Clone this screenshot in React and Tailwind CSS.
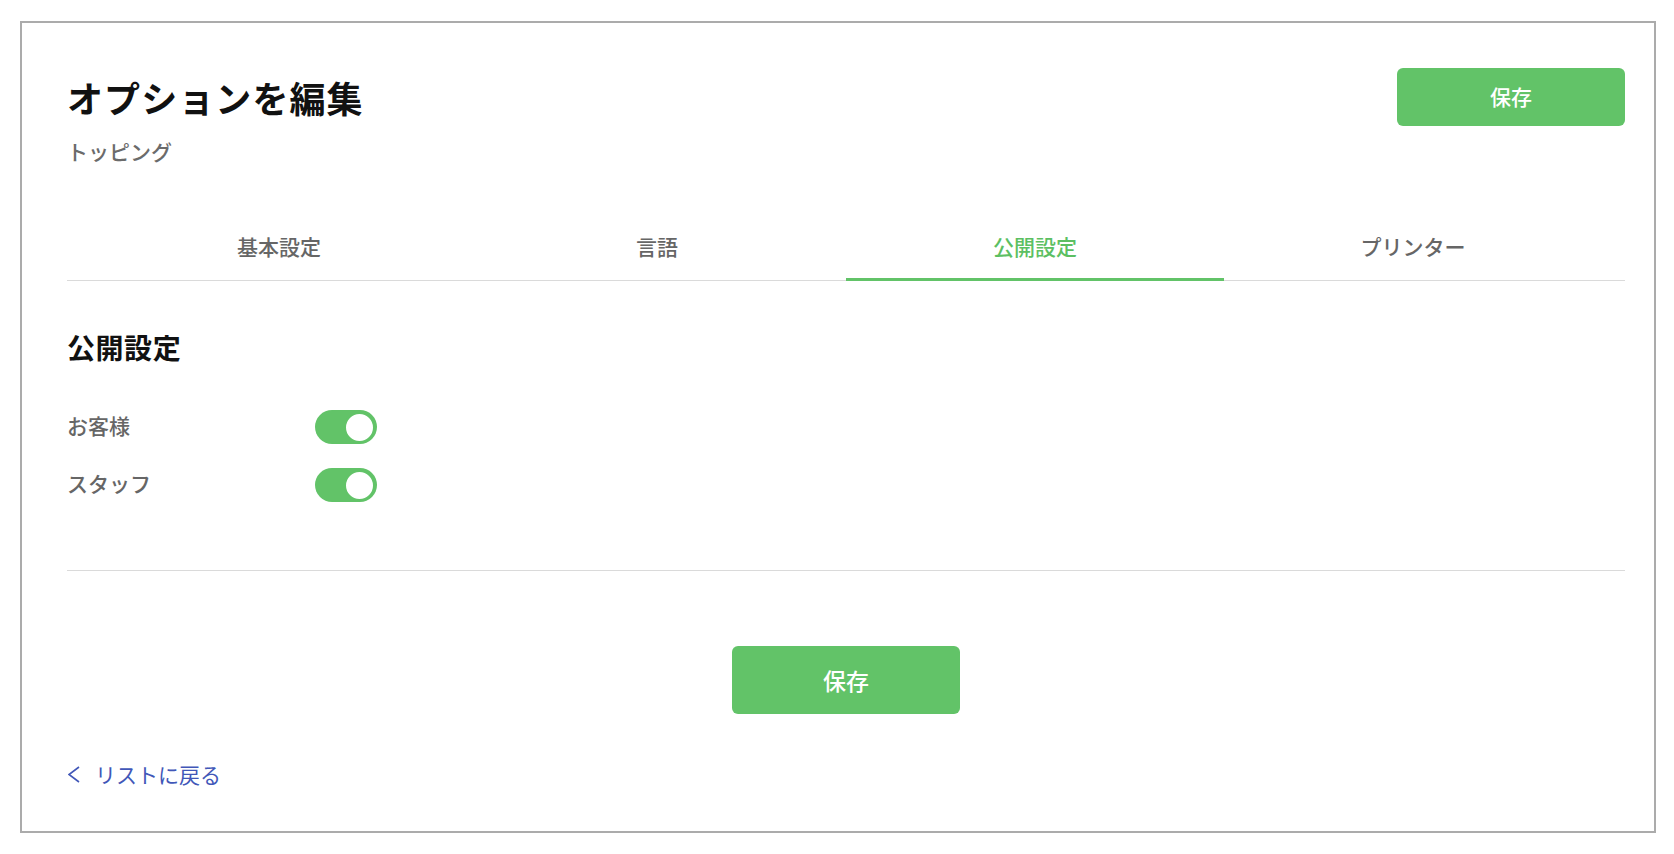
import React, { useState } from "react";

const FONT = { fontFamily: '"Noto Sans CJK JP", "Noto Sans", sans-serif' };

function Toggle({ on, onChange }) {
  return (
    <button
      type="button"
      onClick={onChange}
      className={`w-[62px] h-[34px] rounded-full flex items-center px-[2px] ${on ? "bg-[#62c368] justify-end" : "bg-[#d5d5d5] justify-start"}`}
    >
      <span className={`block w-[31px] h-[31px] rounded-full bg-white border-2 ${on ? "border-[#62c368]" : "border-[#d5d5d5]"}`} />
    </button>
  );
}

export default function App() {
  const [tab, setTab] = useState(2);
  const [customer, setCustomer] = useState(true);
  const [staff, setStaff] = useState(true);
  const tabs = ["基本設定", "言語", "公開設定", "プリンター"];

  return (
    <div className="w-[1674px] h-[854px] bg-white pt-[21px] pl-[20px]" style={FONT}>
      <div className="w-[1636px] h-[812px] border-2 border-[#ababab] pl-[45px] pr-[29px] pt-[45px] flex flex-col">
        <div className="flex justify-between items-start">
          <div className="flex flex-col">
            <h1 className="text-[36px] leading-[58px] pb-[6px] font-bold text-[#111] tracking-[0.03em]">オプションを編集</h1>
            <div className="mt-[5px] text-[21px] leading-[28px] text-[#6b6b6b] font-medium">トッピング</div>
          </div>
          <button className="w-[228px] h-[58px] rounded-[6px] bg-[#62c368] text-white text-[21px] font-medium">保存</button>
        </div>

        <div className="mt-[49px] border-b border-[#dadada]">
          <div className="flex px-[23px] -mb-px">
            {tabs.map((t, i) => (
              <button
                key={t}
                type="button"
                onClick={() => setTab(i)}
                className={`flex-1 h-[67px] pt-0 flex items-center justify-center border-b-[3px] text-[21px] leading-[28px] font-medium ${i === tab ? "border-[#62c368] text-[#5cbf62]" : "border-transparent text-[#666]"}`}
              >
                {t}
              </button>
            ))}
          </div>
        </div>

        <h2 className="mt-[48px] text-[28px] leading-[36px] font-bold text-[#111] tracking-[0.02em]">公開設定</h2>

        <div className="mt-[45px] flex flex-col gap-[24px]">
          <div className="flex items-center">
            <div className="w-[248px] pb-[4px] text-[21px] leading-[28px] text-[#666] font-medium">お客様</div>
            <Toggle on={customer} onChange={() => setCustomer(!customer)} />
          </div>
          <div className="flex items-center">
            <div className="w-[248px] pb-[4px] text-[21px] leading-[28px] text-[#666] font-medium">スタッフ</div>
            <Toggle on={staff} onChange={() => setStaff(!staff)} />
          </div>
        </div>

        <div className="mt-[68px] h-px bg-[#dadada]" />

        <div className="mt-[75px] flex justify-center">
          <button className="w-[228px] h-[68px] rounded-[6px] bg-[#62c368] text-white text-[23px] font-medium">保存</button>
        </div>

        <a href="#" className="mt-[46px] self-start flex items-center text-[#4157b8] text-[21px] leading-[28px]">
          <svg width="12" height="17" viewBox="0 0 12 17" className="ml-px" fill="none">
            <polyline points="11,1 1,8.5 11,16" stroke="#4157b8" strokeWidth="1.6" strokeLinejoin="miter" />
          </svg>
          <span className="ml-[15px]">リストに戻る</span>
        </a>
      </div>
    </div>
  );
}
